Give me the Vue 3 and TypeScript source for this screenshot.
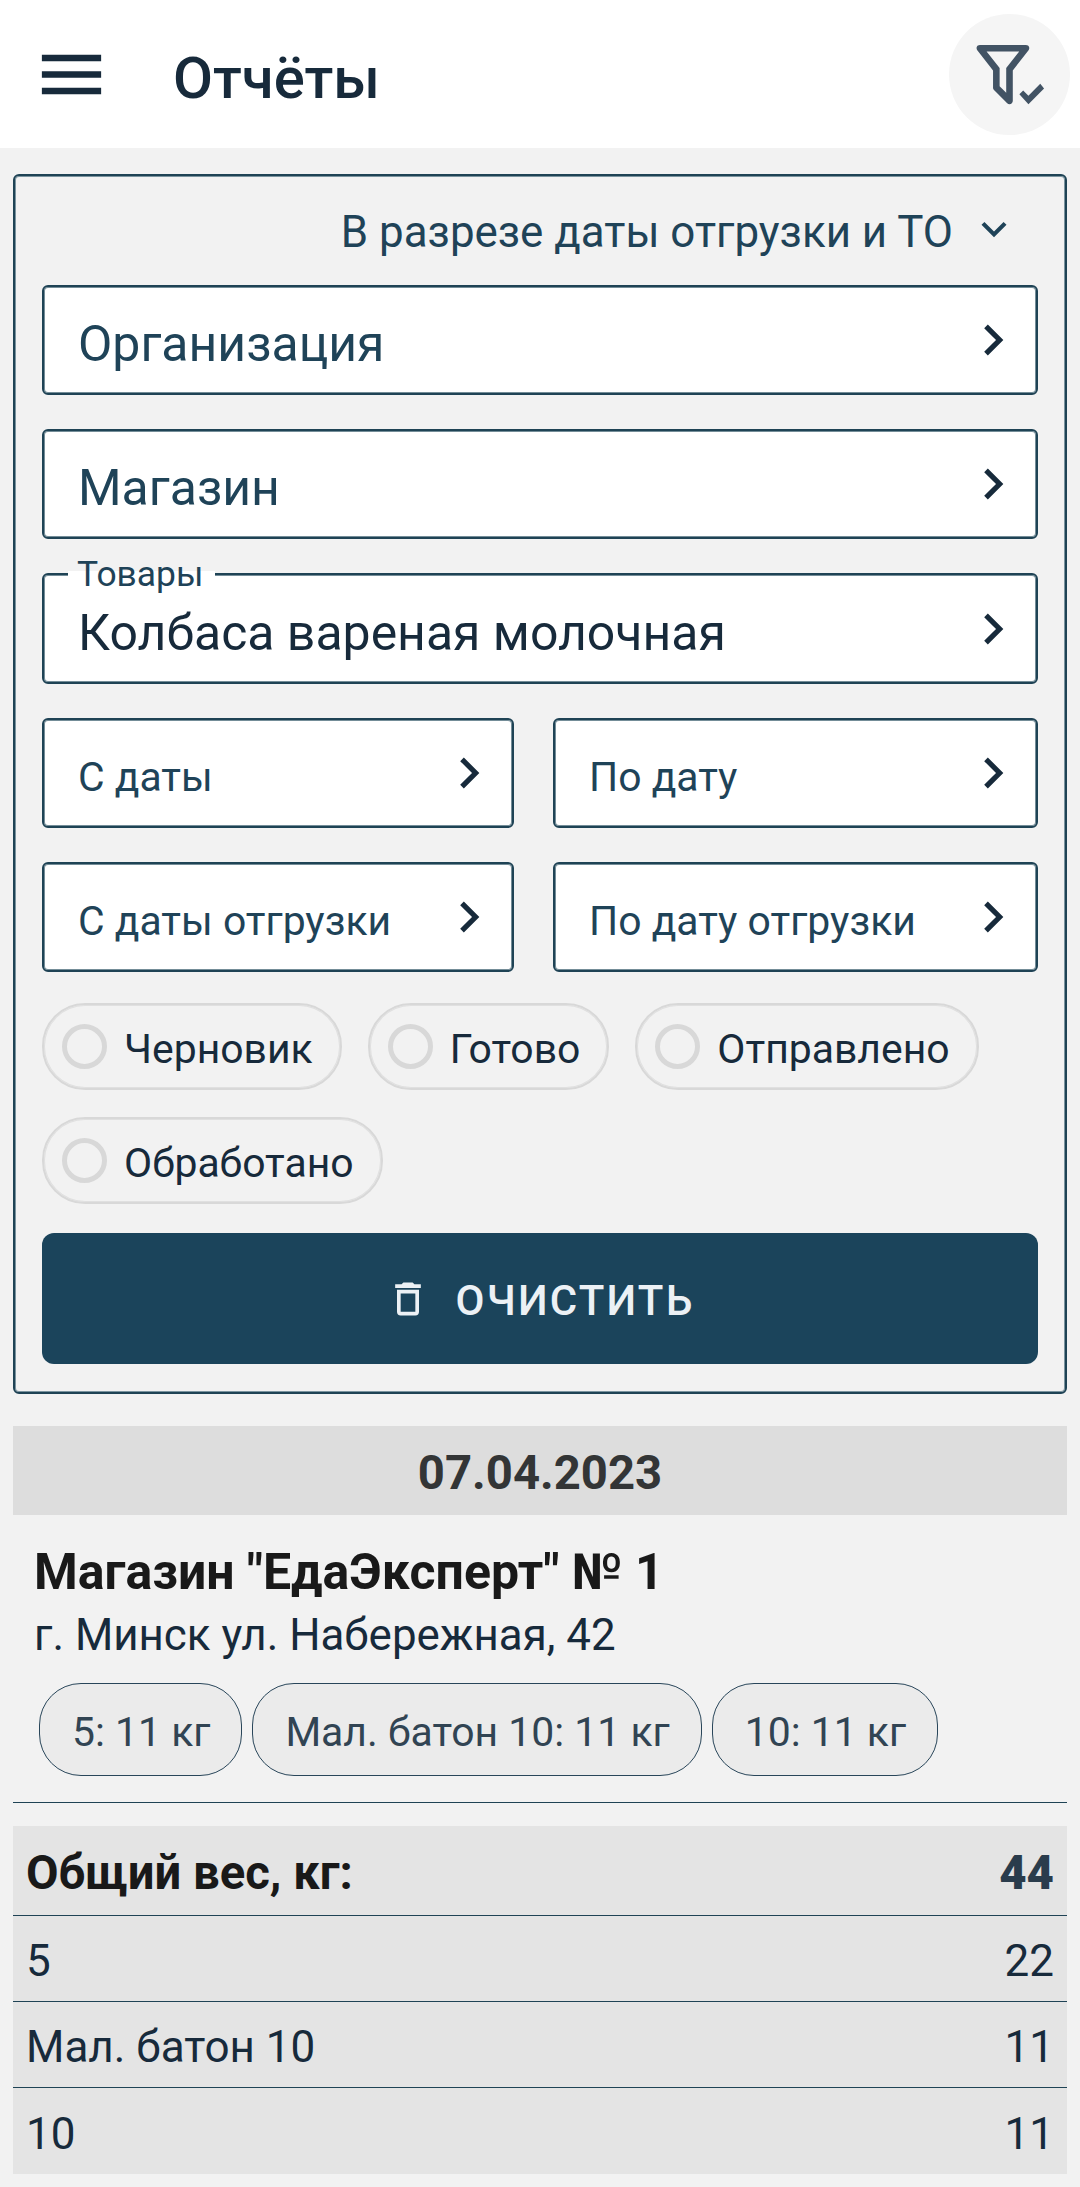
<script setup lang="ts">
interface Field {
  label: string
  value?: string
}

interface Row {
  name: string
  value: string
}

const wideFields: Field[] = [
  { label: 'Организация' },
  { label: 'Магазин' },
  { label: 'Товары', value: 'Колбаса вареная молочная' },
]

const dateRows: string[][] = [
  ['С даты', 'По дату'],
  ['С даты отгрузки', 'По дату отгрузки'],
]

const statuses: string[] = ['Черновик', 'Готово', 'Отправлено', 'Обработано']

const goods: string[] = ['5: 11 кг', 'Мал. батон 10: 11 кг', '10: 11 кг']

const rows: Row[] = [
  { name: '5', value: '22' },
  { name: 'Мал. батон 10', value: '11' },
  { name: '10', value: '11' },
]

const chevron = 'M8.59,16.58L13.17,12L8.59,7.41L10,6L16,12L10,18L8.59,16.58Z'
</script>

<template>
  <div class="page">
    <header class="bar">
      <svg class="menu" viewBox="0 0 24 24"><path d="M3,6H21V8H3V6M3,11H21V13H3V11M3,16H21V18H3V16Z" /></svg>
      <h1 class="title">Отчёты</h1>
      <button class="filter" type="button">
        <svg viewBox="0 0 24 24">
          <path d="M13,19.88C13.04,20.18 12.94,20.5 12.71,20.71C12.32,21.1 11.69,21.1 11.3,20.71L7.29,16.7C7.06,16.47 6.96,16.16 7,15.87V10.75L2.21,4.62C1.87,4.19 1.95,3.56 2.38,3.22C2.57,3.08 2.78,3 3,3H17C17.22,3 17.43,3.08 17.62,3.22C18.05,3.56 18.13,4.19 17.79,4.62L13,10.75V19.88M5.04,5L9,10.06V15.58L11,17.58V10.05L14.96,5H5.04M17.75,21L15,18L16.16,16.84L17.75,18.43L21.34,14.84L22.5,16.25L17.75,21Z" />
        </svg>
      </button>
    </header>

    <section class="panel">
      <div class="mode">
        <span>В разрезе даты отгрузки и ТО</span>
        <svg viewBox="0 0 24 24"><path d="M7.41,8.58L12,13.17L16.59,8.58L18,10L12,16L6,10L7.41,8.58Z" /></svg>
      </div>

      <div v-for="f in wideFields" :key="f.label" class="field" :class="{ filled: f.value }">
        <span v-if="f.value" class="float">{{ f.label }}</span>
        <span class="text">{{ f.value ?? f.label }}</span>
        <svg viewBox="0 0 24 24"><path :d="chevron" /></svg>
      </div>

      <div v-for="(pair, i) in dateRows" :key="i" class="pair">
        <div v-for="d in pair" :key="d" class="field small">
          <span class="text">{{ d }}</span>
          <svg viewBox="0 0 24 24"><path :d="chevron" /></svg>
        </div>
      </div>

      <div class="statuses">
        <div v-for="s in statuses" :key="s" class="status">
          <i class="ring"></i>
          <span>{{ s }}</span>
        </div>
      </div>

      <button class="clear" type="button">
        <svg viewBox="0 0 24 24"><path d="M6,19A2,2 0 0,0 8,21H16A2,2 0 0,0 18,19V7H6V19M8,9H16V19H8V9M15.5,4L14.5,3H9.5L8.5,4H5V6H19V4H15.5Z" /></svg>
        <span>ОЧИСТИТЬ</span>
      </button>
    </section>

    <div class="date">07.04.2023</div>

    <section class="shop">
      <h2>Магазин "ЕдаЭксперт" № 1</h2>
      <p>г. Минск ул. Набережная, 42</p>
      <div class="goods">
        <span v-for="g in goods" :key="g">{{ g }}</span>
      </div>
    </section>

    <section class="totals">
      <div class="row head"><span>Общий вес, кг:</span><b>44</b></div>
      <div v-for="r in rows" :key="r.name" class="row"><span>{{ r.name }}</span><span>{{ r.value }}</span></div>
    </section>
  </div>
</template>

<style>
body {
  margin: 0;
  background: #f2f2f2;
}
</style>

<style scoped>
.page {
  box-sizing: border-box;
  width: 1080px;
  height: 2187px;
  overflow: hidden;
  background: #f2f2f2;
  color: #172a3b;
  font-family: Roboto, "Noto Sans", sans-serif;
}
.page * {
  box-sizing: border-box;
}
svg {
  display: block;
  flex: none;
  fill: currentColor;
}
.bar {
  display: flex;
  align-items: center;
  height: 148px;
  padding: 0 10px 0 32px;
  background: #fff;
}
.menu {
  width: 79px;
  height: 79px;
}
.title {
  margin: 0 auto 0 62px;
  font-size: 58px;
  line-height: 68px;
  font-weight: 500;
  padding-top: 7px;
}
.filter {
  display: flex;
  align-items: center;
  justify-content: center;
  width: 121px;
  height: 121px;
  padding: 0;
  border: 0;
  border-radius: 50%;
  background: #f5f5f5;
  color: #425364;
}
.filter svg {
  width: 79px;
  height: 79px;
}
.panel {
  width: 1054px;
  height: 1220px;
  margin: 26px 13px 0;
  padding: 0 27px;
  border: 2px solid #1f4355;
  border-radius: 6px;
  box-shadow: inset 0 0 0 1px #7b949f;
}
.mode {
  display: flex;
  align-items: center;
  justify-content: flex-end;
  height: 109px;
  padding: 0 19px 0 0;
  color: #1f4358;
  font-size: 43.9px;
}
.mode span {
  line-height: 60px;
  padding-top: 3px;
}
.mode svg {
  width: 50px;
  height: 50px;
  margin: 0 0 3px 16px;
}
.field {
  position: relative;
  display: flex;
  align-items: center;
  justify-content: space-between;
  height: 110px;
  margin-bottom: 34px;
  padding: 0 12px 0 34px;
  border: 2px solid #1f4355;
  border-radius: 6px;
  background: #fff;
  box-shadow: inset 0 0 0 1px #748d98;
  color: #172a3b;
}
.field svg {
  width: 62px;
  height: 62px;
}
.text {
  padding-top: 7px;
  color: #1f4358;
  font-size: 49.95px;
  line-height: 60px;
  white-space: nowrap;
}
.filled {
  height: 111px;
}
.filled .text {
  padding-top: 8px;
  color: #172a3b;
}
.float {
  position: absolute;
  left: 24px;
  top: -4px;
  width: 147px;
  height: 38px;
  padding-left: 9px;
  background: #fff;
  color: #1f4358;
  font-size: 35.4px;
  line-height: 7px;
}
.pair {
  display: flex;
  gap: 39px;
}
.pair .field {
  width: 485px;
}
.pair .field:first-child {
  width: 472px;
}
.small .text {
  padding-top: 8px;
  font-size: 40.9px;
}
.statuses {
  display: flex;
  flex-wrap: wrap;
  gap: 27px 26px;
  margin-top: -3px;
}
.status {
  display: flex;
  align-items: center;
  height: 87px;
  padding: 0 27px 0 18px;
  border: 2px solid #d8d8d8;
  border-radius: 43px;
  box-shadow: inset 0 0 0 1px #e0e0e0;
  font-size: 40.9px;
  line-height: 50px;
}
.status span {
  padding-top: 5px;
}
.ring {
  width: 45px;
  height: 45px;
  margin-right: 17px;
  border: 5px solid #d8d8d8;
  border-radius: 50%;
}
.clear {
  display: flex;
  align-items: center;
  justify-content: center;
  width: 996px;
  height: 131px;
  margin-top: 29px;
  padding: 0;
  border: 0;
  border-radius: 12px;
  background: #1b445b;
  color: #ecf1f5;
  font: 500 42px/50px Roboto, "Noto Sans", sans-serif;
  letter-spacing: 2.2px;
}
.clear svg {
  width: 44px;
  height: 44px;
  margin-right: 26px;
}
.clear span {
  padding-top: 5px;
}
.date {
  height: 89px;
  margin: 32px 13px 0;
  background: #ddd;
  color: #333536;
  font-size: 47.25px;
  font-weight: 700;
  line-height: 94px;
  text-align: center;
}
.shop {
  height: 288px;
  margin: 0 13px;
  padding: 27px 0 0 21px;
  border-bottom: 1px solid #1f4355;
}
.shop h2 {
  margin: 0;
  color: #191919;
  font-size: 50px;
  font-weight: 700;
  line-height: 60px;
}
.shop p {
  margin: 0;
  padding-top: 1px;
  font-size: 43.9px;
  line-height: 64px;
}
.goods {
  display: flex;
  gap: 10px;
  margin: 16px 0 0 5px;
}
.goods span {
  height: 93px;
  padding: 0 31px 0 32px;
  border: 1px solid #29465a;
  border-radius: 42px;
  background: #ebebeb;
  color: #314453;
  font-size: 40.9px;
  line-height: 96px;
}
.totals {
  margin: 23px 13px 0;
  background: #e4e4e4;
}
.row {
  display: flex;
  justify-content: space-between;
  height: 86px;
  padding: 0 13px;
  border-bottom: 1px solid #1f4355;
  font-size: 44px;
  line-height: 91px;
}
.row:last-child {
  border-bottom: 0;
  line-height: 93px;
}
.head {
  height: 90px;
  font-size: 47.25px;
  font-weight: 700;
  line-height: 95px;
}
.head span {
  color: #191919;
}
.head b {
  color: #2a3c4c;
}
</style>
